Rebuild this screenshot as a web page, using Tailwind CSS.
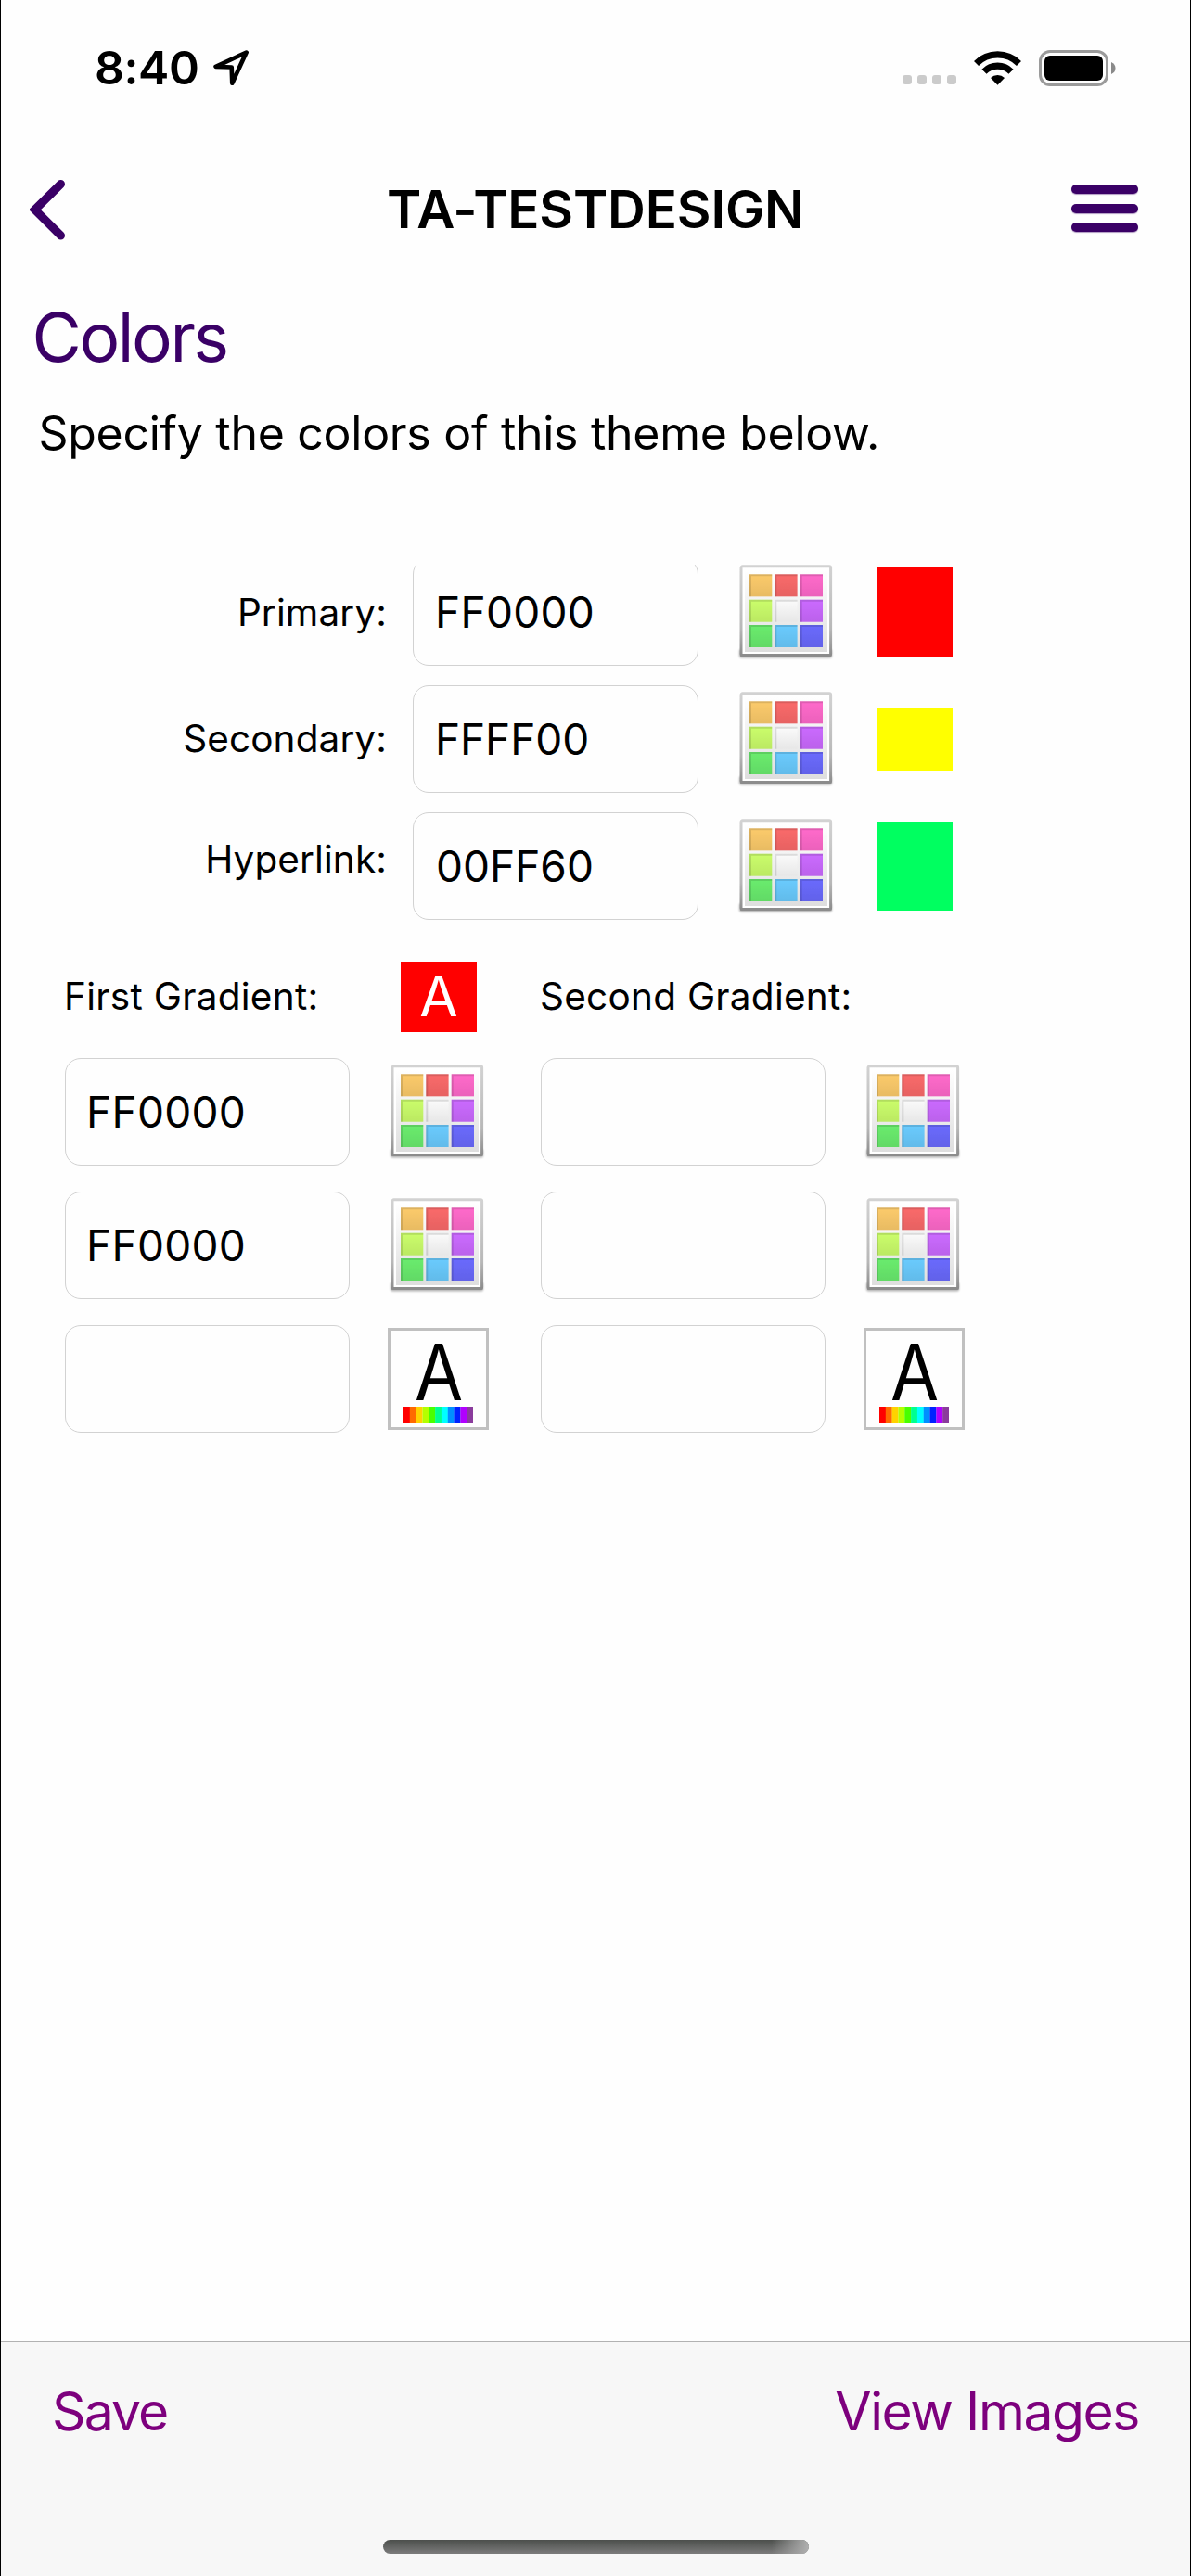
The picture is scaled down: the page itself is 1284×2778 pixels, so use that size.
<!DOCTYPE html>
<html lang="en">
<head>
<meta charset="utf-8">
<title>TA-TESTDESIGN</title>
<script src="https://cdn.jsdelivr.net/npm/@tailwindcss/browser@4"></script>
</head>
<body class="w-[1284px] h-[2778px] overflow-hidden bg-[#fefefe] border-x border-black flex flex-col font-['Inter',sans-serif] text-black whitespace-nowrap">

<!-- shared icons -->
<svg class="absolute size-0" aria-hidden="true">
  <defs>
    <linearGradient id="frame" x1="0" y1="0" x2="0" y2="1"><stop offset="0" stop-color="#d2d2d2"/><stop offset=".7" stop-color="#b8b8b8"/><stop offset="1" stop-color="#8c8c8c"/></linearGradient>
    <linearGradient id="panel" x1="0" y1="0" x2="0" y2="1"><stop offset="0" stop-color="#fff"/><stop offset="1" stop-color="#dedede"/></linearGradient>
    <linearGradient id="shade" x1="0" y1="0" x2="0" y2="1"><stop offset="0" stop-color="#000" stop-opacity="0"/><stop offset="1" stop-color="#000" stop-opacity=".08"/></linearGradient>
    <filter id="soft" x="-10%" y="-50%" width="120%" height="200%"><feGaussianBlur stdDeviation="1.3"/></filter>
    <filter id="edge" x="-5%" y="-5%" width="110%" height="110%"><feGaussianBlur stdDeviation=".6"/></filter>
  </defs>
  <symbol id="palette" viewBox="0 0 104 104">
    <rect x="2" y="92" width="100" height="9.5" rx="2" fill="#000" opacity=".3" filter="url(#soft)"/>
    <g filter="url(#edge)">
      <rect x="4" y="2.8" width="96.6" height="95.6" rx="1.5" fill="#fff" stroke="url(#frame)" stroke-width="3"/>
      <path d="M3 98.6H101.5" stroke="#8c8c8c" stroke-width="2.2"/>
      <rect x="8" y="6.500" width="89" height="88.500" fill="url(#panel)"/>
      <rect x="13" y="11.300" width="24.300" height="24" fill="#fccb6b"/>
      <rect x="40.300" y="11.300" width="24.300" height="24" fill="#fa6a6a"/>
      <rect x="67.700" y="11.300" width="24.300" height="24" fill="#ff6acb"/>
      <rect x="13" y="38.700" width="24.300" height="24" fill="#cbfd6b"/>
      <rect x="40.300" y="38.700" width="24.300" height="24" fill="#fbfbfb"/>
      <rect x="67.700" y="38.700" width="24.300" height="24" fill="#cb6aff"/>
      <rect x="13" y="66" width="24.300" height="24" fill="#6aec6e"/>
      <rect x="40.300" y="66" width="24.300" height="24" fill="#6acbfe"/>
      <rect x="67.700" y="66" width="24.300" height="24" fill="#6a6afd"/>
      <g fill="url(#shade)">
        <rect x="13" y="11.300" width="24.300" height="24"/><rect x="40.300" y="11.300" width="24.300" height="24"/><rect x="67.700" y="11.300" width="24.300" height="24"/>
        <rect x="13" y="38.700" width="24.300" height="24"/><rect x="40.300" y="38.700" width="24.300" height="24"/><rect x="67.700" y="38.700" width="24.300" height="24"/>
        <rect x="13" y="66" width="24.300" height="24"/><rect x="40.300" y="66" width="24.300" height="24"/><rect x="67.700" y="66" width="24.300" height="24"/>
      </g>
      <path d="M14 35.300V12.300H37.300M41.300 35.300V12.300H64.600M68.700 35.300V12.300H92M14 62.700V39.700H37.300M41.300 62.700V39.700H64.600M68.700 62.700V39.700H92M14 90V67H37.300M41.300 90V67H64.600M68.700 90V67H92" fill="none" stroke="#000" stroke-opacity=".12" stroke-width="2"/>
    </g>
  </symbol>
  <symbol id="spectrum" viewBox="0 0 75 18">
    <g filter="url(#edge)">
      <rect width="7.500" height="18" fill="#ff0000"/><rect x="6.800" width="7" height="18" fill="#ff6a00"/><rect x="13.600" width="7" height="18" fill="#ffd200"/><rect x="20.500" width="7" height="18" fill="#b4ff00"/><rect x="27.300" width="7" height="18" fill="#48ff00"/><rect x="34.100" width="7" height="18" fill="#00ff90"/><rect x="40.900" width="7" height="18" fill="#00ffff"/><rect x="47.700" width="7" height="18" fill="#0090ff"/><rect x="54.500" width="7" height="18" fill="#0020ff"/><rect x="61.400" width="7" height="18" fill="#b000ff"/><rect x="68.200" width="6.800" height="18" fill="#8a3a9c"/>
    </g>
  </symbol>
</svg>

<!-- status bar -->
<div class="h-[146px] shrink-0 flex items-center pl-[101px] pr-[80px]">
  <span class="text-[50px] font-semibold tracking-[-0.42px] w-[128px]">8:40</span>
  <svg class="w-[38px] h-[38px]" viewBox="0 0 38 38" fill="none"><path d="M35.600 2.600L2.600 17.800L19.700 18.500L20.300 35.700Z" stroke="#000" stroke-width="4.700" stroke-linejoin="round"/></svg>
  <div class="ml-auto flex items-center">
    <div class="flex gap-1.5 mt-[26px]">
      <i class="size-[10px] rounded-[3px] bg-[#cbcbcb]"></i><i class="size-[10px] rounded-[3px] bg-[#cbcbcb]"></i><i class="size-[10px] rounded-[3px] bg-[#cbcbcb]"></i><i class="size-[10px] rounded-[3px] bg-[#cbcbcb]"></i>
    </div>
    <svg class="ml-[19px] w-[51px] h-[37px]" viewBox="0 0 51 37" fill="none" stroke="#000" stroke-width="7.200"><path d="M2.500 13.500A32.500 32.500 0 0 1 48.500 13.500"/><path d="M11 22.200A20.500 20.500 0 0 1 40 22.200"/><path d="M18 29A11 11 0 0 1 33 29L25.500 36.700Z" fill="#000" stroke="none"/></svg>
    <div class="ml-[19px] w-[75px] h-[39px] rounded-[12px] border-[3px] border-[#9b9b9b] p-[3px]"><div class="h-full rounded-[6px] bg-black"></div></div>
    <svg class="ml-[3px] w-[5px] h-[13px]" viewBox="0 0 5 13"><path d="M0 0Q4.500 2 4.500 6.500T0 13Z" fill="#8a8a8a"/></svg>
  </div>
</div>

<!-- navigation bar -->
<header class="h-[159px] shrink-0 flex items-center pl-[31px] pr-[56px]">
  <svg class="w-[40px] h-[66px]" viewBox="0 0 40 66" fill="none"><path d="M33.500 5.500L5.500 33.200L33.500 61" stroke="#3a0066" stroke-width="9" stroke-linecap="round" stroke-linejoin="miter"/></svg>
  <h1 class="text-[56.5px] font-semibold tracking-[-0.15px] ml-[345px] mt-[2px]">TA-TESTDESIGN</h1>
  <div class="ml-auto w-[72px] flex flex-col gap-[10.500px] -mt-[2px]">
    <i class="h-[10px] rounded-[5px] bg-[#3a0066] shadow-[0_1px_1px_#3a006666]"></i><i class="h-[10px] rounded-[5px] bg-[#3a0066] shadow-[0_1px_1px_#3a006666]"></i><i class="h-[10px] rounded-[5px] bg-[#3a0066] shadow-[0_1px_1px_#3a006666]"></i>
  </div>
</header>

<h2 class="h-[117px] shrink-0 pl-[33.500px] text-[73px] leading-[117px] tracking-[-2.4px] text-[#3a0066]">Colors</h2>
<p class="h-[90px] shrink-0 pl-[40.500px] text-[50px] leading-[90px] tracking-[-0.29px]">Specify the colors of this theme below.</p>

<!-- theme form, scrolled slightly under its top edge -->
<main class="mt-[97px] overflow-hidden shrink-0">
  <section class="-mt-[7px] flex flex-col gap-[21px]">
    <div class="h-[116px] flex items-center">
      <label class="w-[416px] pt-[2px] text-right text-[40.5px] tracking-[0.13px]">Primary:</label>
      <div class="ml-[28px] w-[308px] h-full border border-[#d2d2d2] rounded-[17px] pl-[23px] flex items-center text-[46px] tracking-[0.3px]">FF0000</div>
      <svg class="ml-[42px] size-[104px]"><use href="#palette"/></svg>
      <div class="ml-[46px] w-[82px] h-[96px] bg-[#ff0000]"></div>
    </div>
    <div class="h-[116px] flex items-center">
      <label class="w-[416px] pt-px text-right text-[40.5px] tracking-[0.1px]">Secondary:</label>
      <div class="ml-[28px] w-[308px] h-full border border-[#d2d2d2] rounded-[17px] pl-[23px] flex items-center text-[46px] tracking-[-0.1px]">FFFF00</div>
      <svg class="ml-[42px] size-[104px]"><use href="#palette"/></svg>
      <div class="ml-[46px] w-[82px] h-[68px] bg-[#ffff00]"></div>
    </div>
    <div class="h-[116px] flex items-center">
      <label class="w-[416px] pb-[14px] text-right text-[40.5px] tracking-[0.1px]">Hyperlink:</label>
      <div class="ml-[28px] w-[308px] h-full border border-[#d2d2d2] rounded-[17px] pl-[24px] flex items-center text-[46px]">00FF60</div>
      <svg class="ml-[42px] size-[104px]"><use href="#palette"/></svg>
      <div class="ml-[46px] w-[82px] h-[96px] bg-[#00ff60]"></div>
    </div>
  </section>

  <section class="mt-[45px] pl-[68px]">
    <div class="h-[76px] grid grid-cols-[513px_513px] items-center text-[40.5px]">
      <div class="flex items-center h-full">
        <span class="w-[363px] tracking-[0.28px]">First Gradient:</span>
        <div class="w-[82px] h-[76px] bg-[#ff0000] text-white text-[60px] leading-[74px] text-center">A</div>
      </div>
      <span class="tracking-[0.25px]">Second Gradient:</span>
    </div>
    <div class="mt-[28px] pl-px grid grid-cols-[513px_513px] gap-y-[28px]">
      <div class="h-[116px] flex items-center">
        <div class="w-[307px] h-full border border-[#d2d2d2] rounded-[17px] pl-[22px] flex items-center text-[46px] tracking-[0.3px]">FF0000</div>
        <svg class="ml-[42px] size-[104px]"><use href="#palette"/></svg>
      </div>
      <div class="h-[116px] flex items-center">
        <div class="w-[307px] h-full border border-[#d2d2d2] rounded-[17px]"></div>
        <svg class="ml-[42px] size-[104px]"><use href="#palette"/></svg>
      </div>
      <div class="h-[116px] flex items-center">
        <div class="w-[307px] h-full border border-[#d2d2d2] rounded-[17px] pl-[22px] flex items-center text-[46px] tracking-[0.3px]">FF0000</div>
        <svg class="ml-[42px] size-[104px]"><use href="#palette"/></svg>
      </div>
      <div class="h-[116px] flex items-center">
        <div class="w-[307px] h-full border border-[#d2d2d2] rounded-[17px]"></div>
        <svg class="ml-[42px] size-[104px]"><use href="#palette"/></svg>
      </div>
      <div class="h-[116px] flex items-center">
        <div class="w-[307px] h-full border border-[#d2d2d2] rounded-[17px]"></div>
        <div class="ml-[41px] w-[109px] h-[110px] border-[3px] border-[#c0c0c0] flex flex-col items-center pt-[14px]">
          <span class="h-[61px] text-[84px] leading-[61px] scale-x-90">A</span>
          <svg class="mt-[7px] w-[75px] h-[18px]"><use href="#spectrum"/></svg>
        </div>
      </div>
      <div class="h-[116px] flex items-center">
        <div class="w-[307px] h-full border border-[#d2d2d2] rounded-[17px]"></div>
        <div class="ml-[41px] w-[109px] h-[110px] border-[3px] border-[#c0c0c0] flex flex-col items-center pt-[14px]">
          <span class="h-[61px] text-[84px] leading-[61px] scale-x-90">A</span>
          <svg class="mt-[7px] w-[75px] h-[18px]"><use href="#spectrum"/></svg>
        </div>
      </div>
    </div>
  </section>
</main>

<!-- toolbar -->
<footer class="mt-auto h-[253px] shrink-0 border-t border-[#b2b2b2] bg-[#f7f7f7] flex flex-col items-center">
  <div class="w-full h-[150px] flex items-center justify-between pl-[55px] pr-[55px] text-[57px] text-[#7d007d]">
    <span class="tracking-[-1.9px]">Save</span>
    <span class="tracking-[-1.44px]">View Images</span>
  </div>
  <div class="mt-[63px] w-[459px] h-[15px] rounded-full bg-linear-to-b from-[#4c4f4c] to-[#7c7c7c] overflow-hidden flex justify-end">
    <div class="w-[40px] h-full bg-linear-to-r from-transparent to-[#b0b0b0]"></div>
  </div>
</footer>
</body>
</html>
